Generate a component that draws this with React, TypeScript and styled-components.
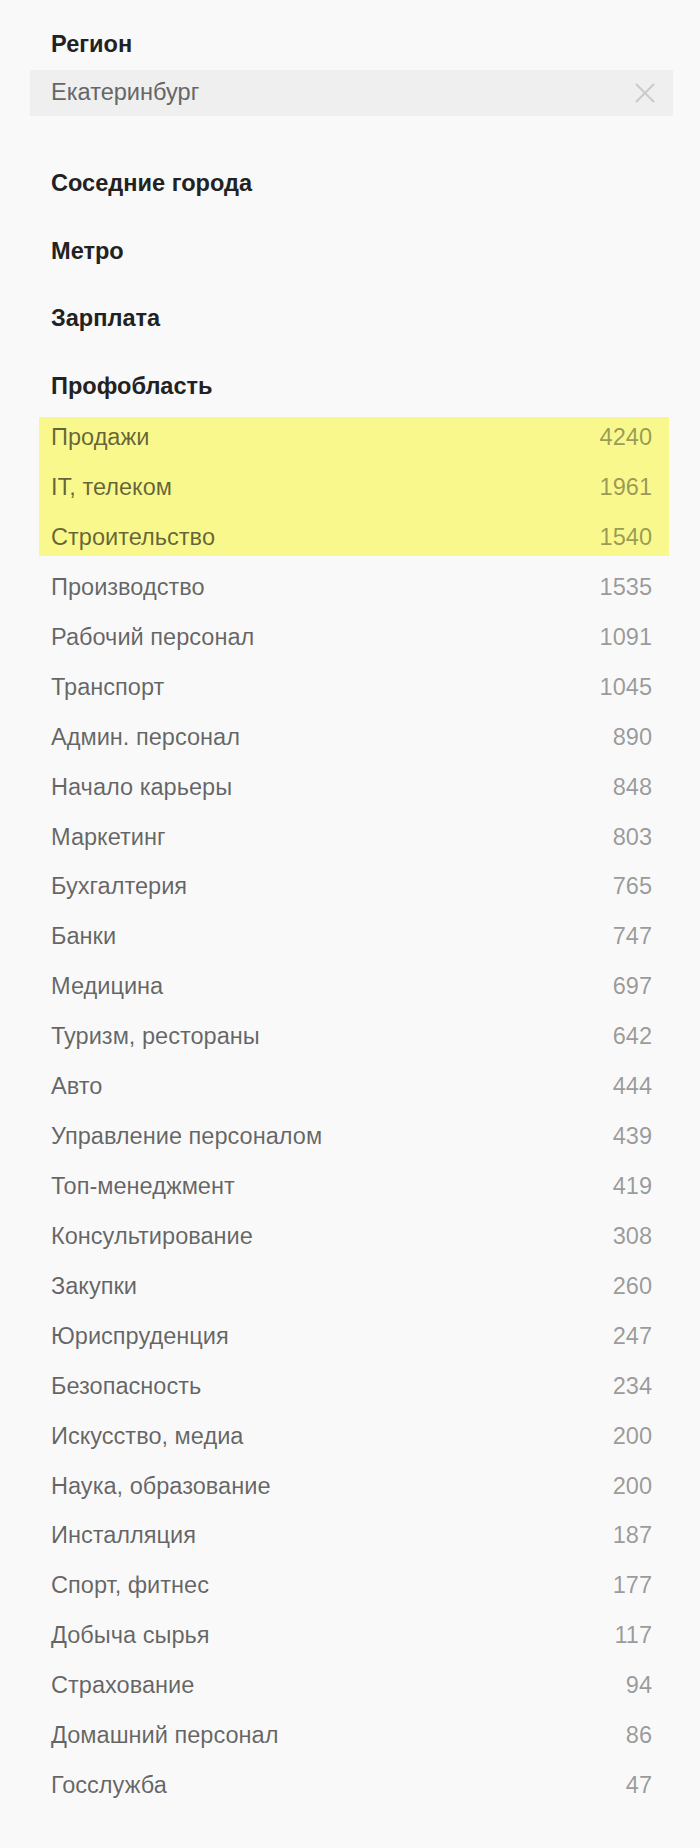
import React from "react";
import styled, { createGlobalStyle } from "styled-components";

const GlobalStyle = createGlobalStyle`
  html, body {
    margin: 0;
    padding: 0;
    background: #f9f9f9;
  }
  body {
    font-family: "Liberation Sans", Arial, sans-serif;
    font-size: 23.57px;
  }
`;

const Page = styled.div`
  min-height: 100vh;
  box-sizing: border-box;
  padding: 30px 27px 44px 30px;
  display: flex;
  flex-direction: column;
`;

const Heading = styled.div<{ $gapBelow: number }>`
  font-weight: bold;
  color: #222;
  line-height: 28px;
  padding-left: 21px;
  margin-bottom: ${(p) => p.$gapBelow}px;
`;

const Field = styled.div`
  height: 46px;
  background: #efefef;
  display: flex;
  align-items: center;
  justify-content: space-between;
  padding: 0 18px 0 21px;
  margin-bottom: 53px;
`;

const FieldText = styled.span`
  color: #666;
  line-height: 46px;
  padding-bottom: 2px;
`;

const ClearIcon = styled.svg`
  width: 20px;
  height: 20px;
  display: block;
`;

const List = styled.div`
  display: flex;
  flex-direction: column;
  gap: 11.34px;
  padding: 0 4px 0 9px;
`;

const Highlight = styled.div`
  display: flex;
  flex-direction: column;
  gap: 11.34px;
  background: #f9f88c;
`;

const Row = styled.div`
  display: flex;
  justify-content: space-between;
  align-items: baseline;
  box-sizing: border-box;
  height: 38.6px;
  padding: 6px 17px 0 12px;
  line-height: 28px;
`;

const Name = styled.span`
  color: rgba(0, 0, 0, 0.6);
`;

const Count = styled.span`
  color: rgba(0, 0, 0, 0.4);
`;

const highlighted: [string, number][] = [
  ["Продажи", 4240],
  ["IT, телеком", 1961],
  ["Строительство", 1540],
];

const items: [string, number][] = [
  ["Производство", 1535],
  ["Рабочий персонал", 1091],
  ["Транспорт", 1045],
  ["Админ. персонал", 890],
  ["Начало карьеры", 848],
  ["Маркетинг", 803],
  ["Бухгалтерия", 765],
  ["Банки", 747],
  ["Медицина", 697],
  ["Туризм, рестораны", 642],
  ["Авто", 444],
  ["Управление персоналом", 439],
  ["Топ-менеджмент", 419],
  ["Консультирование", 308],
  ["Закупки", 260],
  ["Юриспруденция", 247],
  ["Безопасность", 234],
  ["Искусство, медиа", 200],
  ["Наука, образование", 200],
  ["Инсталляция", 187],
  ["Спорт, фитнес", 177],
  ["Добыча сырья", 117],
  ["Страхование", 94],
  ["Домашний персонал", 86],
  ["Госслужба", 47],
];

const Item = ({ name, count }: { name: string; count: number }) => (
  <Row>
    <Name>{name}</Name>
    <Count>{count}</Count>
  </Row>
);

export default function App() {
  return (
    <>
      <GlobalStyle />
      <Page>
        <Heading $gapBelow={12}>Регион</Heading>
        <Field>
          <FieldText>Екатеринбург</FieldText>
          <ClearIcon viewBox="0 0 20 20">
            <path d="M1 1 L19 19 M19 1 L1 19" stroke="#cbcbcb" strokeWidth="2.2" fill="none" />
          </ClearIcon>
        </Field>
        <Heading $gapBelow={39.7}>Соседние города</Heading>
        <Heading $gapBelow={39.7}>Метро</Heading>
        <Heading $gapBelow={39.7}>Зарплата</Heading>
        <Heading $gapBelow={17.1}>Профобласть</Heading>
        <List>
          <Highlight>
            {highlighted.map(([n, c]) => (
              <Item key={n} name={n} count={c} />
            ))}
          </Highlight>
          {items.map(([n, c]) => (
            <Item key={n} name={n} count={c} />
          ))}
        </List>
      </Page>
    </>
  );
}
